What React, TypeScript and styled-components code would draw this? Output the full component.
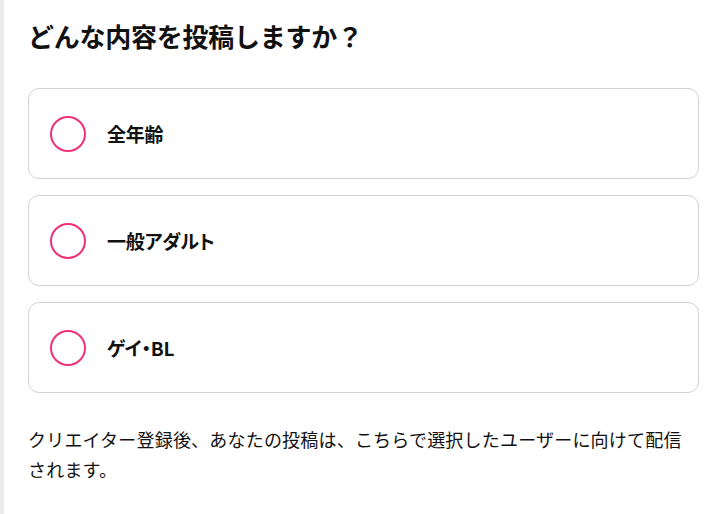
import React, { useState } from "react";
import styled, { createGlobalStyle } from "styled-components";

const GlobalStyle = createGlobalStyle`
  html, body {
    margin: 0;
    padding: 0;
    background: #ffffff;
  }
  body {
    font-family: "Noto Sans CJK JP", "Noto Sans", sans-serif;
    color: #111;
  }
`;

const options = ["全年齢", "一般アダルト", "ゲイ・BL"];

export default function App() {
  const [selected, setSelected] = useState<number | null>(null);

  return (
    <>
      <GlobalStyle />
      <Page>
        <Title>どんな内容を投稿しますか？</Title>
        <OptionList>
          {options.map((label, i) => (
            <Option key={label} onClick={() => setSelected(i)}>
              <Radio checked={selected === i} />
              <Label>{label}</Label>
            </Option>
          ))}
        </OptionList>
        <Note>
          クリエイター登録後、あなたの投稿は、こちらで選択したユーザーに向けて配信されます。
        </Note>
      </Page>
    </>
  );
}

const Page = styled.div`
  min-height: 514px;
  box-sizing: border-box;
  border-left: 4px solid #ebebeb;
  padding: 18px 18px 0 24px;
`;

const Title = styled.h1`
  margin: 0 0 34px;
  font-size: 26px;
  line-height: 36px;
  font-weight: 700;
  letter-spacing: -0.25px;
  color: #111;
`;

const OptionList = styled.div`
  display: flex;
  flex-direction: column;
  gap: 16px;
`;

const Option = styled.label`
  display: flex;
  align-items: center;
  gap: 21px;
  height: 91px;
  box-sizing: border-box;
  padding: 0 21px;
  border: 1px solid #d2d2d2;
  border-radius: 11px;
  background: #fff;
  cursor: pointer;
`;

const Radio = styled.span<{ checked: boolean }>`
  width: 36px;
  height: 36px;
  box-sizing: border-box;
  border-radius: 50%;
  border: 2px solid #ee3079;
  background: ${(p) => (p.checked ? "#ee3079" : "transparent")};
  box-shadow: ${(p) => (p.checked ? "inset 0 0 0 6px #fff" : "none")};
  flex-shrink: 0;
`;

const Label = styled.span`
  font-size: 19px;
  font-weight: 700;
  color: #111;
  font-feature-settings: "palt";
  letter-spacing: -0.2px;
`;

const Note = styled.p`
  margin: 31px 0 0;
  font-size: 18px;
  line-height: 30px;
  letter-spacing: 0.2px;
  color: #111;
`;
